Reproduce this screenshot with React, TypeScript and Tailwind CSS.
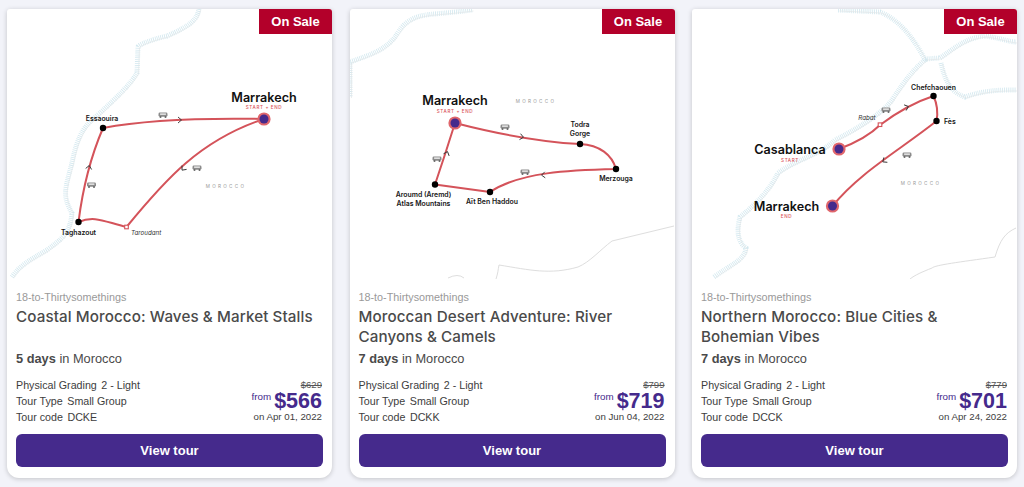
import React from "react";

type Lbl = { x: number; y: number; t: string; k: "city" | "sub" | "stop" | "via" | "country"; a?: "start" | "middle" | "end" };
type MapData = {
  vb: string;
  coast: string[];
  border: string[];
  route: string;
  pins: [number, number][];
  dots: [number, number][];
  squares: [number, number][];
  cars: [number, number][];
  chevrons: [number, number, number][];
  labels: Lbl[];
};

const labelStyle: Record<Lbl["k"], any> = {
  city: { fontSize: 12.6, fontWeight: 600, fill: "#111" },
  sub: { fontSize: 4.6, fontWeight: 500, fill: "#d9535b", letterSpacing: 0.6 },
  stop: { fontSize: 6.9, fontWeight: 600, fill: "#161616" },
  via: { fontSize: 6.2, fontStyle: "italic", fill: "#333" },
  country: { fontSize: 4.6, fill: "#9a9a9a", letterSpacing: 2.3 },
};

function Car({ x, y }: { x: number; y: number }) {
  return (
    <g transform={`translate(${x - 4.5} ${y - 2.5})`}>
      <rect x="0" y="0" width="9" height="4.2" rx="1.4" fill="#8b8b8b" />
      <rect x="1.6" y="0.9" width="5.8" height="1.5" fill="#e6e6e6" />
      <circle cx="2" cy="4.4" r="1" fill="#666" />
      <circle cx="7" cy="4.4" r="1" fill="#666" />
    </g>
  );
}

function RouteMap({ m }: { m: MapData }) {
  return (
    <svg viewBox={m.vb} className="block w-full h-[270px]" style={{ fontFamily: "Inter, sans-serif" }}>
      {m.coast.map((d, i) => (
        <g key={i} fill="none">
          <path d={d} stroke="#d3e8ef" strokeWidth="5" strokeDasharray="0.8 1.1" />
          <path d={d} stroke="#e3e6e8" strokeWidth="0.7" transform="translate(1.5 1)" />
        </g>
      ))}
      {m.border.map((d, i) => (
        <path key={i} d={d} fill="none" stroke="#dedede" strokeWidth="1" />
      ))}
      <path d={m.route} fill="none" stroke="#d4535a" strokeWidth="2" strokeLinejoin="round" />
      {m.chevrons.map(([x, y, r], i) => (
        <path key={i} d="M-2 -3 L1.5 0 L-2 3" transform={`translate(${x} ${y}) rotate(${r})`} fill="none" stroke="#333" strokeWidth="0.9" />
      ))}
      {m.cars.map(([x, y], i) => (
        <Car key={i} x={x} y={y} />
      ))}
      {m.dots.map(([x, y], i) => (
        <circle key={i} cx={x} cy={y} r="3.2" fill="#000" />
      ))}
      {m.squares.map(([x, y], i) => (
        <rect key={i} x={x - 1.8} y={y - 1.8} width="3.6" height="3.6" fill="#fff" stroke="#d4535a" strokeWidth="1.1" />
      ))}
      {m.pins.map(([x, y], i) => (
        <g key={i}>
          <circle cx={x} cy={y} r="6.6" fill="#e0666c" />
          <circle cx={x} cy={y} r="4.5" fill="#452a8c" />
        </g>
      ))}
      {m.labels.map((l, i) => (
        <text key={i} x={l.x} y={l.y} textAnchor={l.a ?? "middle"} style={labelStyle[l.k]}>
          {l.t}
        </text>
      ))}
    </svg>
  );
}

const maps: MapData[] = [
  {
    vb: "7 9 325 270",
    coast: ["M199 9 C197 20 190 26 167 36 C150 40 138 45 138 47 L137 73 C130 85 117 97 100 113 C85 125 78 133 72 163 C65 190 62 195 72 213 C70 235 60 240 47 250 C30 260 20 265 12 277"],
    border: [],
    route: "M264 119 C210 118 150 119 103 128 Q85 170 78.5 222 C95 215 105 222 126.5 227 C165 180 200 140 264 119",
    pins: [[264, 119]],
    dots: [[103, 128], [78.5, 222]],
    squares: [[126.5, 227]],
    cars: [[163, 115], [91.5, 185], [197, 168]],
    chevrons: [[180, 120, 0], [89, 167, -80], [183, 169, 130]],
    labels: [
      { x: 264, y: 102, t: "Marrakech", k: "city" },
      { x: 264, y: 109, t: "START + END", k: "sub" },
      { x: 102, y: 121, t: "Essaouira", k: "stop" },
      { x: 78.5, y: 234.5, t: "Taghazout", k: "stop" },
      { x: 131, y: 235, t: "Taroudant", k: "via", a: "start" },
      { x: 226, y: 187.5, t: "MOROCCO", k: "country" },
    ],
  },
  {
    vb: "350 9 325 270",
    coast: ["M472 10 C450 13 430 14 426 15 C405 18 400 30 395 37 C385 50 370 55 350 62 L350 97"],
    border: ["M674 226 L612 241 C600 250 590 262 578 267 C550 275 530 270 499 265 C498 270 498 273 496 279", "M448 278 Q458 273 464 278"],
    route: "M455 123 C490 132 540 142 580 144 C600 145 612 155 616 169 C570 170 520 172 490 192 L435 184.5 Q445 155 455 123",
    pins: [[455, 123]],
    dots: [[580, 144], [616, 169], [490, 192], [435, 184.5]],
    squares: [],
    cars: [[505, 127], [437, 159], [525, 172]],
    chevrons: [[522, 137, 10], [447, 153, -70], [543, 175, 175]],
    labels: [
      { x: 455, y: 105, t: "Marrakech", k: "city" },
      { x: 455, y: 112.5, t: "START + END", k: "sub" },
      { x: 536, y: 103, t: "MOROCCO", k: "country" },
      { x: 580, y: 127, t: "Todra", k: "stop" },
      { x: 580, y: 135.5, t: "Gorge", k: "stop" },
      { x: 616, y: 181, t: "Merzouga", k: "stop" },
      { x: 423.5, y: 197, t: "Aroumd (Aremd)", k: "stop" },
      { x: 423.5, y: 205.5, t: "Atlas Mountains", k: "stop" },
      { x: 492, y: 203.5, t: "Aït Ben Haddou", k: "stop" },
    ],
  },
  {
    vb: "692 9 325 270",
    coast: [
      "M714 277 C730 265 745 260 746 248 C735 240 738 225 740 217 C755 205 770 190 778 173 C795 160 820 155 835 140 C865 125 885 110 892 100 C905 80 915 68 925 60 C915 40 900 20 880 12 L838 10",
      "M925 59 L940 58 C955 48 965 38 985 36 C1000 38 1010 42 1016 42",
      "M941 63 C945 80 950 92 965 97 C985 90 1000 90 1016 90",
    ],
    border: ["M1016 228 C1005 233 1000 240 995 257 C960 262 935 265 932 268 C922 272 915 275 910 279"],
    route: "M839 149 C855 143 870 135 880 125 C900 110 915 102 933.5 96 Q939 108 936.5 121 C900 150 860 172 832.5 206",
    pins: [[839, 149], [832.5, 206]],
    dots: [[933.5, 96], [936.5, 121]],
    squares: [[880, 124.7]],
    cars: [[886, 110], [907, 155]],
    chevrons: [[907, 107, -20], [884, 161, 145]],
    labels: [
      { x: 790, y: 154, t: "Casablanca", k: "city" },
      { x: 790, y: 161.5, t: "START", k: "sub" },
      { x: 786.5, y: 211, t: "Marrakech", k: "city" },
      { x: 786.5, y: 218, t: "END", k: "sub" },
      { x: 933.5, y: 90, t: "Chefchaouen", k: "stop" },
      { x: 944, y: 123.5, t: "Fès", k: "stop", a: "start" },
      { x: 867, y: 120, t: "Rabat", k: "via", a: "middle" },
      { x: 921, y: 184.5, t: "MOROCCO", k: "country" },
    ],
  },
];

const tours = [
  { title: ["Coastal Morocco: Waves & Market Stalls", "\u00a0"], days: "5 days", code: "DCKE", was: "$629", price: "$566", date: "on Apr 01, 2022" },
  { title: ["Moroccan Desert Adventure: River", "Canyons & Camels"], days: "7 days", code: "DCKK", was: "$799", price: "$719", date: "on Jun 04, 2022" },
  { title: ["Northern Morocco: Blue Cities &", "Bohemian Vibes"], days: "7 days", code: "DCCK", was: "$779", price: "$701", date: "on Apr 24, 2022" },
];

export default function App() {
  return (
    <div className="w-[1024px] h-[487px] overflow-hidden bg-[#f2f3f9] pt-[9px] pl-[7px] flex gap-[17.5px] font-['Liberation_Sans',sans-serif]">
      {tours.map((t, i) => (
        <div key={i} className="relative w-[325px] h-[469px] bg-white rounded-b-[12px] rounded-t-[3px] shadow-[0_1px_5px_rgba(0,0,0,0.2)]">
          <div className="absolute top-0 right-0 w-[73px] h-[25px] bg-[#b3002a] rounded-tr-[3px] flex items-center justify-center text-white font-bold text-[13px]">
            On Sale
          </div>
          <RouteMap m={maps[i]} />
          <div className="px-[9px] pt-[11px]">
            <div className="text-[10.8px] leading-[14px] text-[#999]">18-to-Thirtysomethings</div>
            <div className="mt-[3px] text-[15.2px] leading-[20px] font-medium text-[#4a4a4a] font-['Inter',sans-serif] tracking-[0.1px]">
              {t.title.map((l, j) => (
                <div key={j}>{l}</div>
              ))}
            </div>
            <div className="mt-[2px] text-[12.8px] leading-[20px] text-[#4a4a4a]">
              <span className="font-bold">{t.days}</span> in Morocco
            </div>
            <div className="mt-[8px] flex justify-between items-end text-[10.7px] text-[#3d3d3d]">
              <div className="leading-[16px]">
                <div className="flex gap-[4.5px]"><span>Physical Grading</span><span>2 - Light</span></div>
                <div className="flex gap-[4.5px]"><span>Tour Type</span><span>Small Group</span></div>
                <div className="flex gap-[4.5px]"><span>Tour code</span><span>{t.code}</span></div>
              </div>
              <div className="flex flex-col items-end pr-[1px]">
                <div className="text-[9.6px] leading-[12px] line-through text-[#555]">{t.was}</div>
                <div className="flex items-start gap-[3px] text-[#452a8c] h-[18px] pt-[1px]">
                  <span className="text-[9.8px] leading-[10px]">from</span>
                  <span className="text-[21.5px] leading-[18px] font-bold">{t.price}</span>
                </div>
                <div className="text-[9.7px] leading-[16px]">{t.date}</div>
              </div>
            </div>
            <button className="mt-[9px] w-full h-[33px] rounded-[6px] bg-[#452a8c] text-white font-bold text-[13px] flex items-center justify-center">
              View tour
            </button>
          </div>
        </div>
      ))}
    </div>
  );
}
